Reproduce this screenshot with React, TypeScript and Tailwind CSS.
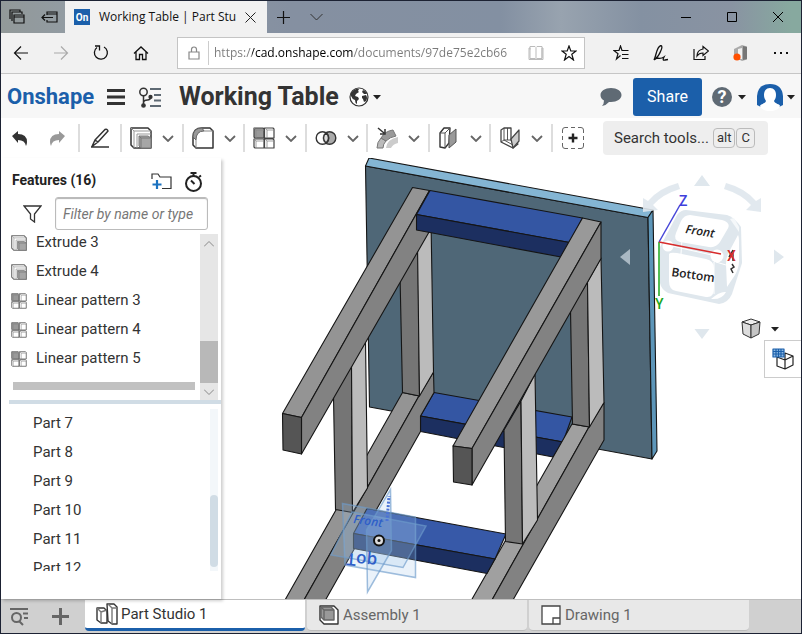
import React from 'react';

const features = [
  { name: 'Extrude 3', kind: 'extrude' },
  { name: 'Extrude 4', kind: 'extrude' },
  { name: 'Linear pattern 3', kind: 'pattern' },
  { name: 'Linear pattern 4', kind: 'pattern' },
  { name: 'Linear pattern 5', kind: 'pattern' },
];

const parts = ['Part 7', 'Part 8', 'Part 9', 'Part 10', 'Part 11', 'Part 12'];

interface IconProps {
  size?: number;
}

function ExtrudeIcon({ size = 22 }: IconProps) {
  return (
    <svg width={size} height={size} viewBox="0 0 22 22" fill="none" stroke={size < 20 ? '#666' : '#333'} strokeLinejoin="round">
      <path d="M1 1h17l3 3v17H4l-3-3z" fill="#fff" strokeWidth="1.5" />
      <path d="M1 1l3 3h17M4 4v17" stroke="#999" />
      <path d="M7 21V7h14" stroke="#999" />
      <path d="M9 9h9l3 2v10H11l-2-2z" fill="#a6a6a6" stroke="#777" />
      <path d="M9 9l2 2h10M11 11v10" stroke="#777" />
    </svg>
  );
}

function FilletIcon() {
  return (
    <svg width="22" height="22" viewBox="0 0 22 22" fill="none" stroke="#333" strokeLinejoin="round">
      <path d="M1 10q0-9 9-9h8l3 3v17H4l-3-3z" fill="#fff" strokeWidth="1.5" />
      <path d="M1 10q0-9 9-9l2 3q-8 0-8 9z" fill="#999" stroke="#666" />
      <path d="M12 4h9M4 13v8" stroke="#888" />
    </svg>
  );
}

function PatternIcon({ size = 22 }: IconProps) {
  return (
    <svg width={size} height={size} viewBox="0 0 22 22" stroke={size < 20 ? '#666' : '#444'} strokeWidth="1.2" strokeLinejoin="round">
      <path d="M1 1h9l1 1v9H2l-1-1z" fill="#999" />
      <path d="M11.500 1H20l1 1v9h-9.500zM1 12h10v9H2l-1-1zM11.500 12H20l1 1v8h-9.500z" fill="#fff" />
      <path d="M1 1l2 2h8M3 3v8M12 1l2 2h7M14 3v8M1 12l2 2h8M3 14v7M12 12l2 2h7M14 14v7" fill="none" stroke="#888" strokeWidth="0.8" />
    </svg>
  );
}

function BooleanIcon() {
  return (
    <svg width="22" height="22" viewBox="0 0 22 22" stroke="#333" strokeWidth="1.4">
      <circle cx="14.5" cy="11" r="6.3" fill="#aaa" />
      <circle cx="7.5" cy="11" r="6.3" fill="#fff" fillOpacity=".65" />
      <path d="M11 6a6.3 6.3 0 0 1 0 10 6.3 6.3 0 0 1 0-10z" fill="#ddd" />
    </svg>
  );
}

function MoveFaceIcon() {
  return (
    <svg width="22" height="22" viewBox="0 0 22 22">
      <path d="M10 21q1-9 12-11v6q-5 1-7 5z" fill="#ccc" />
      <path d="M1 21q0-6 4-10l5 3q-3 3-3 7z" fill="#bbb" stroke="#777" />
      <path d="M5 11l5 3q4-4 10-5l-3-6Q9 4 5 11z" fill="#999" stroke="#777" />
      <path d="M2 1l6 5M9 2v5H4" fill="none" stroke="#333" strokeWidth="1.5" />
    </svg>
  );
}

function DraftIcon() {
  return (
    <svg width="22" height="22" viewBox="0 0 22 22" strokeLinejoin="round">
      <path d="M2 6l4-5h6l-1 15-4 5-5-1z" fill="#fff" stroke="#333" strokeWidth="1.4" />
      <path d="M2 6h5v15M7 6l5-5" fill="none" stroke="#555" />
      <path d="M11 8l7-6v13l-7 6z" fill="#999" stroke="#555" />
    </svg>
  );
}

function SheetMetalIcon() {
  return (
    <svg width="22" height="22" viewBox="0 0 22 22" strokeLinejoin="round" fill="none" stroke="#444">
      <path d="M2 3l3-2h7v12l7 4-5 4-12-6z" fill="#fff" strokeWidth="1.3" />
      <path d="M12 12l8-9v11l-6 7z" fill="#ccc" strokeWidth="1.2" />
      <path d="M5 1v12l9 5M8.500 1v12M2 15l3-2h7" strokeWidth="0.9" />
    </svg>
  );
}

function Chevron() {
  return (
    <svg width="12" height="7" viewBox="0 0 12 7" fill="none" stroke="#666" strokeWidth="1.8">
      <path d="M1 1l5 5 5-5" />
    </svg>
  );
}

function Caret() {
  return (
    <svg width="8" height="5" viewBox="0 0 8 5" fill="#222">
      <path d="M0 0h8L4 4.500z" />
    </svg>
  );
}

function PenIcon() {
  return (
    <svg width="20" height="20" viewBox="0 0 20 20" fill="none" stroke="#333" strokeWidth="1.5" strokeLinejoin="round">
      <path d="M2 18.500L5 12 15 1.500q2-1 3 1.500L8 14zM5 12l3 2M1 19h18" />
    </svg>
  );
}

const tools = [
  { label: 'Extrude', Icon: ExtrudeIcon },
  { label: 'Fillet', Icon: FilletIcon },
  { label: 'Linear pattern', Icon: PatternIcon },
  { label: 'Boolean', Icon: BooleanIcon },
  { label: 'Move face', Icon: MoveFaceIcon },
  { label: 'Draft', Icon: DraftIcon },
  { label: 'Sheet metal', Icon: SheetMetalIcon },
];

function TitleBar() {
  return (
    <div className="flex h-8 shrink-0 bg-[linear-gradient(90deg,#929999_0,#929ba2_64px,#8590a1_290px,#8390a2_500px,#98a3af_560px,#8491a2_640px,#8993a2_730px,#87a99f_790px)]">
      <div className="flex w-16 items-center justify-center gap-4">
        <button aria-label="Tabs you set aside">
          <svg width="16" height="16" viewBox="0 0 16 16" fill="none" stroke="#111" strokeWidth="1.2">
            <path d="M1 10V1h10v2M3 12V3h10v2M5 6h10v8H5zM5 8h10" />
          </svg>
        </button>
        <button aria-label="Set tabs aside">
          <svg width="17" height="16" viewBox="0 0 17 16" fill="none" stroke="#111" strokeWidth="1.2">
            <path d="M6 6V3h10v10H6v-2M6 5h10M12 8.500H1M4 5.500l-3 3 3 3" />
          </svg>
        </button>
      </div>
      <div className="flex w-[202px] items-center bg-[#f1f1f1] pl-[9px]">
        <span className="flex h-4 w-4 items-center justify-center bg-[#1b5faa] text-[10px] font-bold text-white">On</span>
        <span className="ml-[9px] w-[138px] font-['Open_Sans',sans-serif] text-xs whitespace-nowrap text-[#111]">Working Table | Part Stu</span>
        <button aria-label="Close tab" className="ml-2">
          <svg width="11" height="11" viewBox="0 0 11 11" fill="none" stroke="#222">
            <path d="M.5.5l10 10M10.500.5l-10 10" />
          </svg>
        </button>
      </div>
      <div className="flex items-center gap-5 pl-2.5">
        <button aria-label="New tab">
          <svg width="13" height="13" viewBox="0 0 13 13" stroke="#111" strokeWidth="1.2">
            <path d="M6.500 0v13M0 6.500h13" />
          </svg>
        </button>
        <button aria-label="Show previews">
          <svg width="13" height="8" viewBox="0 0 13 8" fill="none" stroke="#333">
            <path d="M.5 1l6 6 6-6" />
          </svg>
        </button>
      </div>
      <div className="ml-auto flex items-center gap-9 pr-[18px]">
        <button aria-label="Minimize">
          <svg width="10" height="10" viewBox="0 0 10 10" stroke="#000"><path d="M0 5.500h10" /></svg>
        </button>
        <button aria-label="Maximize">
          <svg width="10" height="10" viewBox="0 0 10 10" fill="none" stroke="#000"><path d="M.5.5h9v9h-9z" /></svg>
        </button>
        <button aria-label="Close">
          <svg width="10" height="10" viewBox="0 0 10 10" stroke="#000"><path d="M0 0l10 10M10 0L0 10" /></svg>
        </button>
      </div>
    </div>
  );
}

function AddressBar() {
  return (
    <div className="flex h-[41px] shrink-0 items-center border-b border-[#c6c6c6] bg-[#f1f1f1] pr-3 pl-3">
      <div className="flex items-center gap-6">
        <button aria-label="Back">
          <svg width="16" height="16" viewBox="0 0 16 16" fill="none" stroke="#111" strokeWidth="1.2"><path d="M15 8H1M8 1.500L1.500 8 8 14.500" /></svg>
        </button>
        <button aria-label="Forward">
          <svg width="16" height="16" viewBox="0 0 16 16" fill="none" stroke="#aaa" strokeWidth="1.2"><path d="M1 8h14M8 1.500L14.500 8 8 14.500" /></svg>
        </button>
        <button aria-label="Refresh">
          <svg width="16" height="16" viewBox="0 0 16 16" fill="none" stroke="#111" strokeWidth="1.300"><path d="M11 2a6.500 6.500 0 1 1-7 .5M2 1h4.500v4.500" /></svg>
        </button>
        <button aria-label="Home">
          <svg width="16" height="16" viewBox="0 0 16 16" fill="none" stroke="#111" strokeWidth="1.300"><path d="M1 8.500l7-6.500 7 6.500M3 7v7.500h3.500v-5h3v5H13V7" /></svg>
        </button>
      </div>
      <div className="ml-7 flex h-8 w-[408px] items-center border border-[#c4c4c4] bg-white">
        <svg className="ml-2.5" width="12" height="14" viewBox="0 0 12 14" fill="none" stroke="#888" strokeWidth="1.2">
          <path d="M1 6h10v7H1zM3.500 6V3.500a2.500 2.500 0 0 1 5 0V6" />
        </svg>
        <div className="ml-2 h-6 w-px bg-[#ccc]" />
        <input
          aria-label="Address"
          readOnly
          value="https://cad.onshape.com/documents/97de75e2cb66"
          className="ml-[5px] w-[306px] bg-[linear-gradient(90deg,#7a7a7a_38px,#000_38px,#000_139px,#7a7a7a_139px)] bg-clip-text font-['Open_Sans',sans-serif] text-xs text-transparent outline-none"
        />
        <button aria-label="Reading view" className="ml-2">
          <svg width="16" height="14" viewBox="0 0 16 14" fill="none" stroke="#bbb"><path d="M8 2v11M1 2h1v10.500h5l1 1 1-1h5V2h1v11.500H1zM2 .5h5l1 1 1-1h5V12M2 .5v3" /></svg>
        </button>
        <button aria-label="Add to favorites" className="ml-[17px]">
          <svg width="16" height="16" viewBox="0 0 16 16" fill="none" stroke="#111" strokeWidth="1.200"><path d="M8 1l1.800 5H15l-4.200 3.200L12.500 15 8 11.500 3.500 15l1.700-5.800L1 6h5.200z" /></svg>
        </button>
      </div>
      <div className="ml-auto flex items-center gap-6">
        <button aria-label="Favorites">
          <svg width="16" height="16" viewBox="0 0 16 16" fill="none" stroke="#111" strokeWidth="1.200"><path d="M15.500 5.500H9L7.500 1 6 5.500H1l4 3.200L3.500 14l4-3.500M9 9.500h6.500M9 13.500h6.500" /></svg>
        </button>
        <button aria-label="Add notes">
          <svg width="16" height="16" viewBox="0 0 16 16" fill="none" stroke="#111" strokeWidth="1.300"><path d="M1 15q1-2 2-6Q5 1 8 .5q2 1-.5 6-2 5-4.500 6.500M1 15l3-2q4 1 7-1-2 4 1 3l3-.5" /></svg>
        </button>
        <button aria-label="Share page">
          <svg width="16" height="16" viewBox="0 0 16 16" fill="none" stroke="#111" strokeWidth="1.200"><path d="M1 4v10.500h11V11M10 1.500L15.500 6 10 10.500V8Q6 8 4 11q0-6 6-7z" /></svg>
        </button>
        <button aria-label="Office">
          <svg width="16" height="16" viewBox="0 0 16 16"><path d="M1 4l8-4 5 1.500v13L9 16l-4-2h4V3L5 4v6H1z" fill="#aaa" /><path d="M10 1l4 1v12l-4 1z" fill="#777" /><circle cx="4" cy="12" r="3.600" fill="#ff4f00" /></svg>
        </button>
        <button aria-label="More">
          <svg width="16" height="4" viewBox="0 0 16 4" fill="#111"><path d="M1 1h2v2H1zM7 1h2v2H7zM13 1h2v2h-2z" /></svg>
        </button>
      </div>
    </div>
  );
}

function Header() {
  return (
    <header className="flex h-11 shrink-0 items-center bg-[#f7f7f7] pt-0.5 pr-1.5 pl-1.5">
      <a href="#" className="w-[88px] text-[22px] leading-6 font-bold whitespace-nowrap text-[#1b5faa]">Onshape</a>
      <button aria-label="Menu" className="ml-3">
        <svg width="18" height="18" viewBox="0 0 18 18" fill="#333"><path d="M0 1h18v3H0zM0 7.500h18v3H0zM0 14h18v3H0z" /></svg>
      </button>
      <button aria-label="Versions and history" className="ml-3.5">
        <svg width="23" height="21" viewBox="0 0 23 21" fill="none" stroke="#333" strokeWidth="1.500">
          <circle cx="4.500" cy="5" r="3.700" />
          <path d="M4.500 9v8M4.500 16q0-3 4-3 3 0 3-3" />
          <circle cx="4.500" cy="18.500" r="1.600" fill="#333" />
          <circle cx="11.500" cy="10" r="1.400" fill="#333" />
          <path d="M11 2h11M15 8h7M15 13.500h7M11 19h11" stroke="#5f6a74" strokeWidth="2" />
        </svg>
      </button>
      <h1 className="ml-[17px] text-[25px] leading-8 font-bold whitespace-nowrap text-[#333]">Working Table</h1>
      <button aria-label="Public document" className="ml-2.5 flex items-center gap-1">
        <svg width="20" height="20" viewBox="0 0 20 20">
          <circle cx="10" cy="10" r="9" fill="#fff" stroke="#333" strokeWidth="1.200" />
          <path d="M2 6q2-3 5-4l3 0-1 2 1 1-3 2-1 2 3 1 1 2-2 2v3q-2-1-2-4-3-1-4-4zM14 3q3 1 4 4l-3 0-2-2zM13 9l4-1q2 3 0 6l-2 1-1-3-1-1z" fill="#333" />
        </svg>
        <Caret />
      </button>
      <div className="ml-auto flex items-center">
        <button aria-label="Comments">
          <svg width="22" height="20" viewBox="0 0 22 20" fill="#5f6a74"><path d="M11 1c6 0 10.500 3 10.500 7S17 15 11 15H9q-3 3.500-7 4 2-2 2-5.500Q.5 11.500.5 8c0-4 4.500-7 10.500-7z" /></svg>
        </button>
        <button className="ml-[11px] h-[38px] w-[69px] rounded-[3px] bg-[#1b5faa] text-base text-white">Share</button>
        <button aria-label="Help" className="ml-2.5 flex items-center gap-1.5">
          <span className="flex h-5 w-5 items-center justify-center rounded-full bg-[#5f6a74] text-lg leading-5 font-bold text-white">?</span>
          <Caret />
        </button>
        <button aria-label="Account" className="ml-[11px] flex items-center gap-1">
          <svg width="26" height="28" viewBox="0 0 26 28">
            <path d="M0 22V13Q1 1 13 1t13 12v9l-4 2H4z" fill="#1b5faa" />
            <path d="M13 5c-4 0-6 3-6 7 0 3 1 4 2 6-1 3-6 3-6 5 1 3 5 5 10 5s9-2 10-5c0-2-5-2-6-5 1-2 2-3 2-6 0-4-2-7-6-7z" fill="#fff" />
          </svg>
          <Caret />
        </button>
      </div>
    </header>
  );
}

function Toolbar() {
  return (
    <div className="flex h-10 shrink-0 items-center bg-white pl-[11px]">
      <button aria-label="Undo">
        <svg width="16" height="16" viewBox="0 0 16 16" fill="#333"><path d="M0 6l6-5v3q9 0 9 8 0 2-1 4-1-6-8-6v3z" /></svg>
      </button>
      <button aria-label="Redo" className="ml-[22px]">
        <svg width="16" height="16" viewBox="0 0 16 16" fill="#999"><path d="M15 6L9 1v3q-9 0-9 8 0 2 1 4 1-6 8-6v3z" /></svg>
      </button>
      <div className="ml-3 flex h-7 w-[42px] items-center border-l-2 border-[#ddd] pl-2.5">
        <button aria-label="Sketch"><PenIcon /></button>
      </div>
      <div className="grid w-[431px] grid-cols-7">
        {tools.map(({ label, Icon }) => (
          <div key={label} className="flex h-7 items-center border-l-2 border-[#ddd] pl-2">
            <button aria-label={label}><Icon /></button>
            <button aria-label={`${label} menu`} className="ml-2.5"><Chevron /></button>
          </div>
        ))}
      </div>
      <div className="flex h-7 w-[52px] items-center border-l-2 border-[#ddd] pl-2">
        <button aria-label="Add custom features">
          <svg width="24" height="24" viewBox="0 0 24 24" fill="none" stroke="#666">
            <path d="M1.500 7V4q0-2.500 2.500-2.500h3M17 1.500h3q2.500 0 2.500 2.500v3M22.500 17v3q0 2.500-2.500 2.500h-3M7 22.500H4q-2.500 0-2.500-2.500v-3M10 1.500h4M10 22.500h4M1.500 10v4M22.500 10v4" />
            <path d="M12 7.500v9M7.500 12h9" stroke="#222" strokeWidth="2.400" />
          </svg>
        </button>
      </div>
      <button className="flex h-[34px] w-[165px] items-center rounded bg-[#eee] pl-[11px] text-[15px] text-[#333]">
        Search tools...
        <kbd className="ml-1 rounded-sm border border-[#bbb] px-[3px] font-['Roboto',sans-serif] text-[13px] leading-[18px]">alt</kbd>
        <kbd className="ml-px rounded-sm border border-[#bbb] px-1 font-['Roboto',sans-serif] text-[13px] leading-[18px]">C</kbd>
      </button>
    </div>
  );
}

function FeaturePanel() {
  return (
    <aside className="z-10 flex w-[220px] shrink-0 flex-col bg-white text-[15px] text-[#333] shadow-[2px_2px_3px_rgba(0,0,0,0.2)]">
      <div className="flex h-[39px] shrink-0 items-center pt-1 pr-[18px] pl-[11px]">
        <h2 className="text-sm font-bold text-[#222]">Features (16)</h2>
        <button aria-label="New folder" className="mt-1 ml-auto">
          <svg width="21" height="17" viewBox="0 0 21 17" fill="none" stroke="#333" strokeWidth="1.200">
            <path d="M1 6V1h6l2 3h11v11.500h-9" />
            <path d="M6 7v9M1.500 11.500h9" stroke="#1b72c0" strokeWidth="2.200" />
          </svg>
        </button>
        <button aria-label="Rebuild times" className="mt-1 ml-3">
          <svg width="19" height="20" viewBox="0 0 19 20" fill="none" stroke="#222" strokeWidth="2">
            <circle cx="9.500" cy="11.500" r="7.500" />
            <path d="M9.500 4V1M6.500 1h6M7 8.500l3.500 3.500M15 5l2-1.500" />
          </svg>
        </button>
      </div>
      <div className="flex h-[37px] shrink-0 items-center pr-[13px] pb-1 pl-[22px]">
        <svg width="19" height="18" viewBox="0 0 19 18" fill="none" stroke="#333" strokeWidth="1.300"><path d="M1 1h17l-6.500 8v8L7.500 14V9z" /></svg>
        <input
          aria-label="Filter by name or type"
          placeholder="Filter by name or type"
          className="ml-[13px] h-[33px] w-0 grow rounded-[3px] border border-[#bbb] px-[7px] text-sm shadow-[inset_0_1px_1px_rgba(0,0,0,0.3)] outline-none placeholder:text-[#777] placeholder:italic"
        />
      </div>
      <div className="flex h-[166px] shrink-0 pr-[3px]">
        <div className="flex min-w-0 grow flex-col overflow-hidden">
          <ul className="-mt-1.5">
            {features.map((f) => (
              <li key={f.name} className="flex h-[29px] items-center gap-[9px] pl-2.5">
                {f.kind === 'extrude' ? <ExtrudeIcon size={16} /> : <PatternIcon size={16} />}
                <span>{f.name}</span>
              </li>
            ))}
          </ul>
          <div className="mt-[9px] mr-[5px] ml-3 h-2 bg-[#c1c1c1]" />
        </div>
        <div className="flex w-[18px] flex-col items-center bg-[#e6e6e6] pt-[7px] pb-[5px]">
          <svg width="10" height="6" viewBox="0 0 10 6" fill="none" stroke="#888"><path d="M0 5.500l5-5 5 5" /></svg>
          <div className="mt-auto h-[42px] w-full bg-[#b8b8b8]" />
          <svg className="mt-1.5" width="10" height="6" viewBox="0 0 10 6" fill="none" stroke="#888"><path d="M0 .5l5 5 5-5" /></svg>
        </div>
      </div>
      <div className="ml-2 h-1 shrink-0 bg-[#d0dce5]" />
      <div className="mt-[5px] mb-7 flex min-h-0 flex-1 pr-[3px]">
        <ul className="grow overflow-hidden pl-8">
          {parts.map((part) => (
            <li key={part} className="flex h-[29px] items-center">{part}</li>
          ))}
        </ul>
        <div className="flex w-2 flex-col bg-[#f3f7fa]">
          <div className="mt-auto mb-1 h-[72px] rounded-sm bg-[#d0dce5]" />
        </div>
      </div>
    </aside>
  );
}

// faces are listed back to front
const faces = [
  { fill: '#4f6777', points: '365.500,166 648,217.500 652,459 369.500,407' },
  { fill: '#84b5d3', points: '365.500,166 369,158 653,210 648,217.500' },
  { fill: '#5d96b9', points: '648,217.500 653,210 657,451 652,459' },
  { fill: '#3456a3', points: '434,392.500 572,417 563,442 420.500,416' },
  { fill: '#1c2f60', points: '420.500,416 563,442 553,457 420.500,431.500' },
  { fill: '#949494', points: '402.500,392.500 419,396 304,600 285,600' },
  { fill: '#828282', points: '419,396 433.500,372 434,392.500 420.500,416 420.500,431.500 325.500,600 304,600' },
  { fill: '#a0a0a0', points: '572,424 589,427 492,600 471.500,600' },
  { fill: '#828282', points: '589,427 604,402.500 604,440 513,600 492,600' },
  { fill: '#3759a8', points: '367,508.500 506,534 495,559 353.500,533.500' },
  { fill: '#1c2f60', points: '353.500,533.500 495,559 487,573.500 353.500,548.500' },
  { fill: '#757575', points: '400,275 418,245 419.500,396 402.500,392.500' },
  { fill: '#bbbbbb', points: '417.500,245 431,220 433.500,372 419.500,396' },
  { fill: '#757575', points: '333.500,396 351.500,365 352.500,512.500 335.500,509.500' },
  { fill: '#bbbbbb', points: '351.500,365 365.500,340 367.500,488 352.500,512.500' },
  { fill: '#757575', points: '570.500,310 587.500,282 589.500,427 572.500,424' },
  { fill: '#bbbbbb', points: '587.500,282 601,258 604,402.500 589.500,427' },
  { fill: '#757575', points: '504,430 521,401 522.500,544 505.500,541.500' },
  { fill: '#bbbbbb', points: '521,401 535,374 537.500,520 522.500,544' },
  { fill: '#949494', points: '412.500,187.500 429.500,190.500 301.500,417.500 282.500,413.500' },
  { fill: '#828282', points: '429.500,190.500 428.500,233 301.500,454 301.500,417.500' },
  { fill: '#555555', points: '282.500,413.500 301.500,417.500 301.500,454 283,450' },
  { fill: '#3456a3', points: '430,190.500 582.500,218 569.500,242.500 416.500,214.500' },
  { fill: '#1c2f60', points: '416.500,214.500 569.500,242.500 561,257 416.500,230' },
  { fill: '#999999', points: '582.500,218 601,222 472,448.500 453,446' },
  { fill: '#828282', points: '601,222 601,258.500 472,485 472,448.500' },
  { fill: '#555555', points: '453,446 472,448.500 472,485 453.500,482' },
];

function ModelView() {
  return (
    <main className="relative min-w-0 grow overflow-hidden bg-white">
      <svg className="block h-full w-full" viewBox="221 158 580 441" preserveAspectRatio="xMidYMid slice">
        <g stroke="#151515" strokeWidth="1.100" strokeLinejoin="round">
          {faces.map((face) => (
            <polygon key={face.points} points={face.points} fill={face.fill} />
          ))}
        </g>

        {/* Default planes and origin */}
        <g fill="#9fc2e6" fillOpacity=".22" stroke="#6d9bcb" strokeOpacity=".65" strokeWidth="1.500">
          <path d="M342.500 503.500L415.500 517v60.500L345 565z" />
          <path d="M352 512l74 14-23 41.500-72-12.500z" />
          <path d="M390.500 489.500l1 61-24 41.500-1-62z" />
        </g>
        <g fill="#2f5fc8" fontFamily="Open Sans, sans-serif">
          <text transform="translate(353 523) rotate(8)" fontSize="12" fontStyle="italic" fontWeight="600">Front</text>
          <text transform="translate(347 553) rotate(5) scale(1 -1)" fontSize="17" fontWeight="600">Top</text>
        </g>
        <path d="M387 521l2-25" stroke="#4b73d6" strokeWidth="3" strokeDasharray="2 1.500" />
        <circle cx="379" cy="540.500" r="5" fill="#ddd" stroke="#111" strokeWidth="2" />
        <circle cx="379" cy="540.500" r="1.500" fill="#111" />

        {/* View cube */}
        <g fill="#dfe7ed">
          <path d="M702 175l8 11h-16zM784 257l-10 7.500v-15zM702 339l-7.500-10h15z" />
          <path d="M620 257l10-8v16z" fill="#a9b8c3" />
          <path d="M678 183l2 6q-17 5-27 16l5 5-15 2v-14l5 3q11-13 30-18zM726 183l-2 6q17 5 27 16l-5 5 15 2v-14l-5 3q-11-13-30-18z" fillOpacity=".9" />
          <path d="M686 210l41 5q7 2 14 12l1 36-10 31q-4 9-13 10l-51-11q-7-4-8-10v-36l17-32q4-5 9-5z" />
        </g>
        <g fill="#fff">
          <path d="M690 215l32 5q10 3 5 10l-7 12q-4 6-11 5l-29-5q-7-2-4-9l5-12q3-6 9-6z" />
          <path d="M669 254q1-2 8-1l29 6q8 2 8 9v20q0 10-8 9l-30-6q-7-1-7-10z" />
          <path d="M738 235q1 1 1 8v18q0 7-4 14l-8 12-1-23q0-8 4-14z" />
          <circle cx="668" cy="246" r="5.500" />
          <circle cx="717" cy="256" r="6.500" />
          <path d="M711 299q9-8 15-7-4 8-15 7z" />
          <path d="M734 218l5 9v5l-9-13z" fill="#f5f8fa" />
        </g>
        <path d="M663 244l53 12M682 239l-1 15M714 262v32M726 265l-10-3" stroke="#fff" strokeWidth="1" />
        <g fill="#222" fontFamily="Open Sans, sans-serif" fontWeight="600">
          <text transform="translate(685 233) rotate(9)" fontSize="12" fontStyle="italic">Front</text>
          <text transform="translate(671 276) rotate(8)" fontSize="12">Bottom</text>
        </g>
        <path d="M733 250l-4 7M733 253v8M732 264l2 3-3 2 2 4" stroke="#333" strokeWidth="1.500" fill="none" />
        <g strokeWidth="1.500">
          <path d="M659 242l21-37" stroke="#4646d8" />
          <path d="M659 242v54" stroke="#1ba61b" />
          <path d="M659 242l62 12" stroke="#d82c2c" />
        </g>
        <g fontFamily="Roboto, sans-serif" fontSize="14" fontWeight="500">
          <text x="679" y="206" fill="#3f3fdc">Z</text>
          <text x="655" y="309" fill="#1ba61b">Y</text>
          <text x="727" y="261" fill="#d82c2c">X</text>
        </g>
      </svg>

      <button aria-label="Display style" className="absolute top-[160px] right-[22px] flex items-center gap-[9px]">
        <svg width="22" height="22" viewBox="0 0 22 22" stroke="#333" strokeLinejoin="round">
          <path d="M2 4l9-3 9 3-9 3z" fill="#eee" />
          <path d="M2 4l9 3v13l-8-4z" fill="#ddd" />
          <path d="M20 4l-9 3v13l8-4z" fill="#c5c5c5" />
        </svg>
        <Caret />
      </button>
      <button aria-label="Tables" className="absolute top-[182px] right-0 flex h-[38px] w-[37px] items-center justify-center border border-r-0 border-[#ccc] bg-white">
        <svg width="22" height="22" viewBox="0 0 22 22" fill="none" stroke="#222" strokeWidth="1.200" strokeLinejoin="round">
          <path d="M13 5l8 3v9l-8 4-8-3V9l8 3zM13 12v9M13 12l8-4" />
          <path d="M1 1h11v8H1z" fill="#8db9e2" stroke="#1b5faa" />
          <path d="M4 1v8M6.500 1v8M9 1v8M1 3.500h11M1 6h11" stroke="#1b5faa" />
        </svg>
      </button>
    </main>
  );
}

function DocumentTabs() {
  return (
    <nav className="flex h-[34px] shrink-0 items-start border-t border-[#bfbfbf] bg-[#d0d0d0] text-[15px] text-[#666]">
      <button aria-label="Tab manager" className="mt-2 ml-[9px]">
        <svg width="19" height="18" viewBox="0 0 19 18" fill="none" stroke="#666" strokeWidth="2"><path d="M0 1h18M13 5.500h5M14 10h4M9 13l4 4" /><circle cx="6.500" cy="9.500" r="4.500" /></svg>
      </button>
      <button aria-label="Insert new tab" className="mt-2 ml-[23px]">
        <svg width="17" height="17" viewBox="0 0 17 17" stroke="#666" strokeWidth="3"><path d="M8.500 0v17M0 8.500h17" /></svg>
      </button>
      <button className="ml-4 flex h-[31px] w-[220px] items-center gap-[3px] rounded-b border-b-[3px] border-[#1b5faa] bg-white pl-[11px] text-[#333]">
        <svg width="22" height="22" viewBox="0 0 22 22" fill="#fff" stroke="#333" strokeWidth="1.400" strokeLinejoin="round">
          <path d="M1 5h7l3 3v12H5l-4-3z" />
          <path d="M1 5l4 4v11M5 9l6-2" fill="none" stroke="#777" />
          <path d="M11 1h7l3 3v17h-5l-4-3z" />
          <path d="M12 1l4 4v16M16 5h5" fill="none" stroke="#777" />
        </svg>
        Part Studio 1
      </button>
      <button className="ml-0.5 flex h-[31px] w-[220px] items-center gap-1 rounded-b border-b border-[#bbb] bg-[#e8e8e8] pl-3">
        <svg width="20" height="20" viewBox="0 0 20 20" fill="#fff" stroke="#333" strokeWidth="1.400" strokeLinejoin="round">
          <path d="M1 1h14l4 4v14H5l-4-4z" />
          <path d="M2 2h10l3 3v10H5l-3-3z" fill="#999" stroke="#666" />
          <path d="M2 2l3 3h10M5 5v10" fill="none" stroke="#666" />
        </svg>
        Assembly 1
      </button>
      <button className="ml-0.5 flex h-[31px] w-[220px] items-center gap-1 rounded-b border-b border-[#bbb] bg-[#e8e8e8] pl-3">
        <svg width="20" height="20" viewBox="0 0 20 20" fill="#fff" stroke="#444" strokeWidth="1.300"><path d="M1 1h18v18H1zM12 19v-6h7" /></svg>
        Drawing 1
      </button>
    </nav>
  );
}

export default function App() {
  return (
    <div className="flex h-screen flex-col border border-[#1c2233] bg-white font-['Roboto',sans-serif]">
      <TitleBar />
      <AddressBar />
      <Header />
      <Toolbar />
      <div className="flex min-h-0 flex-1">
        <FeaturePanel />
        <ModelView />
      </div>
      <DocumentTabs />
    </div>
  );
}
